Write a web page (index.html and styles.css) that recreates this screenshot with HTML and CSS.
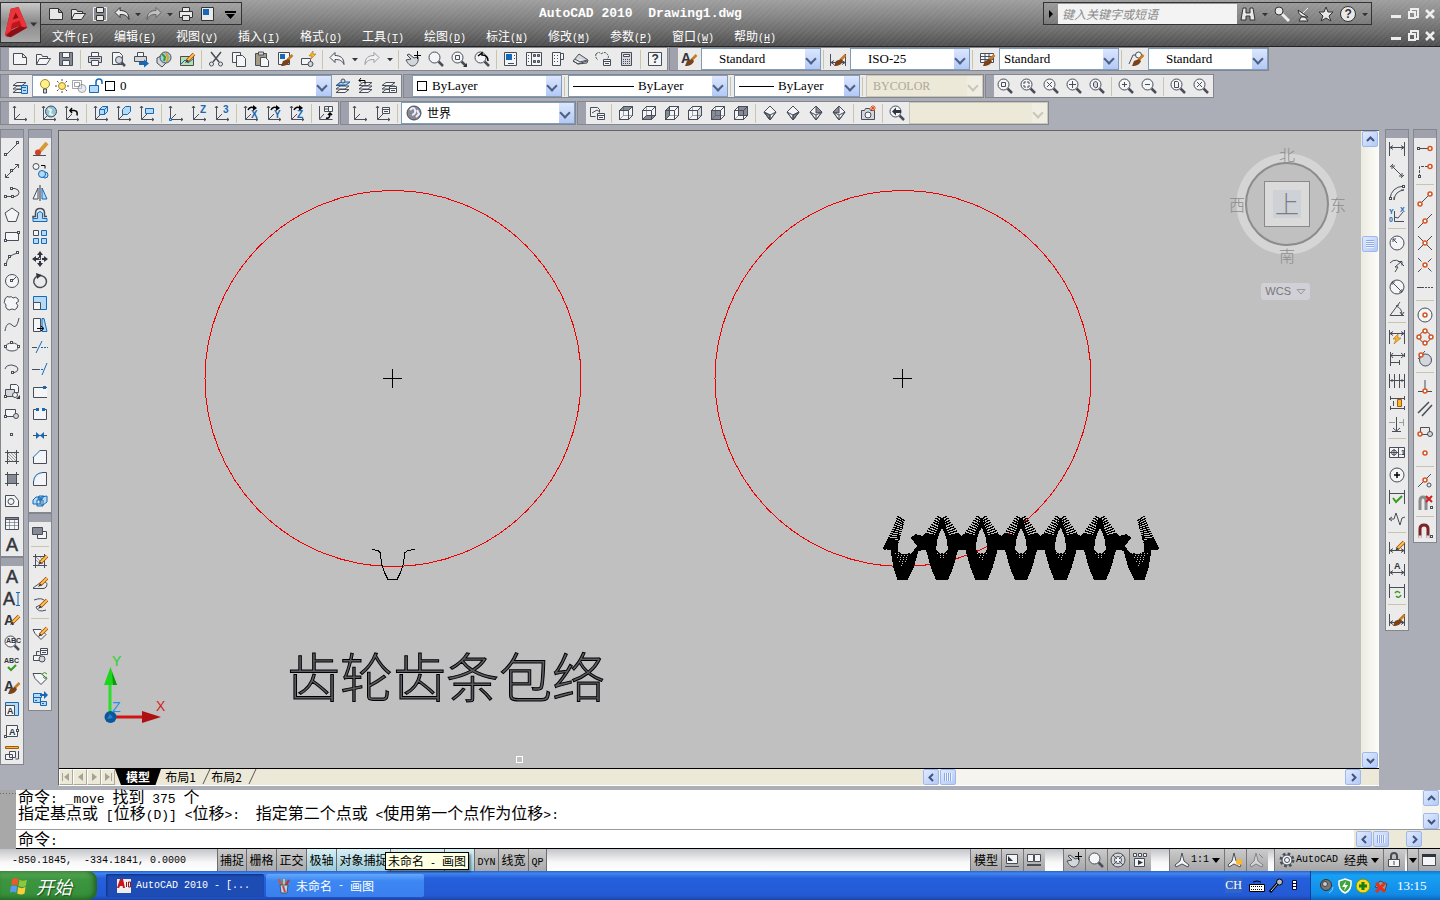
FILE: index.html
```html
<!DOCTYPE html>
<html lang="zh-CN">

<head>
  <meta charset="utf-8">
  <title>AutoCAD 2010 Drawing1.dwg</title>
  <link rel="stylesheet" href="styles.css">
  <script src="script.js"></script>
</head>

<body>
  <header class="titlebar">
    <button class="app-button" aria-label="AutoCAD">
      <svg viewBox="0 0 40 40">
        <path d="M4 33L10 6l8-2 9 21-7 4-2-5-7 3-2 7z" fill="#c3141b" />
        <path d="M10 6l8-2 9 21-5 1-3-8-8 3-1 8-6 4z" fill="#e8343a" />
        <path d="M12 17l3-7 3 5z" fill="#8d0f14" />
        <path d="M5 34l6-6 8-4 8 1-8 5-9 5z" fill="#8d0f14" />
        <path d="M30 20h7l-3.500 4z" fill="#333" />
      </svg>
    </button>
    <div class="title-rows">
      <div class="title-row">
        <div class="quick tools" data-icons="new open save undo dd redo dd print props more"></div>
        <h1>AutoCAD 2010&nbsp; Drawing1.dwg</h1>
        <div class="infocenter">
          <span class="tri-right"></span>
          <input type="text" placeholder="键入关键字或短语" aria-label="搜索">
          <span class="tools" data-icons="binoc dd key dish star helpc dd"></span>
        </div>
        <div class="tools wincontrols" data-icons="min restore close"></div>
      </div>
      <div class="title-row">
        <nav class="menu">
          <a href="#">文件<i>(<u>F</u>)</i></a>
          <a href="#">编辑<i>(<u>E</u>)</i></a>
          <a href="#">视图<i>(<u>V</u>)</i></a>
          <a href="#">插入<i>(<u>I</u>)</i></a>
          <a href="#">格式<i>(<u>O</u>)</i></a>
          <a href="#">工具<i>(<u>T</u>)</i></a>
          <a href="#">绘图<i>(<u>D</u>)</i></a>
          <a href="#">标注<i>(<u>N</u>)</i></a>
          <a href="#">修改<i>(<u>M</u>)</i></a>
          <a href="#">参数<i>(<u>P</u>)</i></a>
          <a href="#">窗口<i>(<u>W</u>)</i></a>
          <a href="#">帮助<i>(<u>H</u>)</i></a>
        </nav>
        <div class="tools wincontrols" data-icons="min restore close"></div>
      </div>
    </div>
  </header>

  <div class="toolbars">
    <div class="toolbar-row">
      <div class="toolbar">
        <span class="tools" data-icons="new open save | print preview publish globe dwf | cut copy paste match blockedit | undo dd redo dd | pan zoom zoomwin zoomprev | props center palettes sheet markup calc | help"></span>
      </div>
      <div class="toolbar">
        <span class="tools" data-icons="textstyle"></span>
        <label class="combo w120 indent"><select aria-label="文字样式"><option>Standard</option></select></label>
        <span class="tools" data-icons="| dimstyle"></span>
        <label class="combo w120 indent"><select aria-label="标注样式"><option>ISO-25</option></select></label>
        <span class="tools" data-icons="| tablestyle"></span>
        <label class="combo w120"><select aria-label="表格样式"><option>Standard</option></select></label>
        <span class="tools" data-icons="| leaderstyle"></span>
        <label class="combo w120 indent"><select aria-label="多重引线样式"><option>Standard</option></select></label>
      </div>
    </div>
    <div class="toolbar-row">
      <div class="toolbar">
        <span class="tools" data-icons="layers"></span>
        <label class="combo w300">
          <span class="glyphs" data-glyphs="bulb sun freeze lock"></span><span class="swatch"></span>
          <select aria-label="图层"><option>0</option></select>
        </label>
        <span class="tools" data-icons="layercur layerprev layerstate"></span>
      </div>
      <div class="toolbar">
        <label class="combo w150"><span class="swatch"></span><select aria-label="颜色"><option>ByLayer</option></select></label>
        <span class="tools" data-icons="|"></span>
        <label class="combo w160"><span class="line long"></span><select aria-label="线型"><option>ByLayer</option></select></label>
        <span class="tools" data-icons="|"></span>
        <label class="combo w126"><span class="line"></span><select aria-label="线宽"><option>ByLayer</option></select></label>
        <span class="tools" data-icons="|"></span>
        <label class="combo w117 off"><select aria-label="打印样式" disabled><option>BYCOLOR</option></select></label>
      </div>
      <div class="toolbar">
        <span class="tools" data-icons="zwin zdyn zscale zcen zobj | zin zout | zall zext"></span>
      </div>
    </div>
    <div class="toolbar-row">
      <div class="toolbar">
        <span class="tools" data-icons="ucs | ucsworld ucsprev | ucsface ucsobj ucsview | ucsorigin ucsz ucs3 | rotx roty rotz | ucsapply"></span>
      </div>
      <div class="toolbar">
        <span class="tools" data-icons="ucs ucsnamed |"></span>
        <label class="combo w174"><span class="glyphs" data-glyphs="world"></span><select class="cn" aria-label="坐标系"><option>世界</option></select></label>
      </div>
      <div class="toolbar">
        <span class="tools" data-icons="views | vtop vbottom vleft vright vfront vback | isw ise ine inw | camera | camprev"></span>
        <label class="combo w139 off"><select aria-label="上一视图" disabled><option></option></select></label>
      </div>
    </div>
  </div>

  <main class="workspace">
    <aside class="dock">
      <div class="dock-col">
        <div class="toolbar vertical"><span class="tools" data-icons="line xline pline polygon rect arc circle cloud spline ellipse earc insert block point hatch gradient region table mtext"></span></div>
        <div class="toolbar vertical"><span class="tools" data-icons="mtext dtext edittext find spell txtstyle scaletext justify spacetrans"></span></div>
      </div>
      <div class="dock-col">
        <div class="toolbar vertical"><span class="tools" data-icons="erase mcopy mirror offset array move rotate scale stretch trim extend breakpt break join chamfer fillet explode"></span></div>
        <div class="toolbar vertical"><span class="tools" data-icons="order | edithatch editpl editspl | editattr blockattr syncattr extract"></span></div>
      </div>
    </aside>

    <section class="document">
      <div class="canvas-row">
        <div class="canvas">
          <svg class="drawing" viewBox="59 131 1302 637">
            <g fill="none" stroke="#e00" shape-rendering="crispEdges">
              <circle cx="393" cy="378.500" r="188" />
              <circle cx="903" cy="378.500" r="188" />
            </g>
            <g fill="none" stroke="#000" shape-rendering="crispEdges">
              <path d="M383 378.500h19M392.500 369v19M893 378.500h19M902.500 369v19" />
              <path d="M372 549.500l6 1 2 2 2 13 3 8 3 6h9l3-6 3-8 2-13 3-2 7-1" />
            </g>
            <g id="envelope" shape-rendering="crispEdges"></g>
            <text class="caption" x="287" y="698">齿轮齿条包络</text>
            <rect x="516.500" y="756.500" width="6" height="6" fill="none" stroke="#fff" />
            <g class="ucs-icon">
              <path d="M110 717V684" stroke="#2ade2a" stroke-width="3" />
              <path d="M110.500 667l-6.500 18h13z" fill="#1ed51e" />
              <path d="M112 672l5 13h-4z" fill="#0a9a0a" />
              <path d="M112 717h31" stroke="#d01515" stroke-width="3" />
              <path d="M142 711l19 6-19 6z" fill="#b01010" />
              <circle cx="110.500" cy="717" r="6" fill="#0b579b" />
              <path d="M107 719l3-5 3 4" fill="#2a80c8" />
              <text x="112" y="666" fill="#1ed51e">Y</text>
              <text x="112" y="712" fill="#2a90ea">Z</text>
              <text x="156" y="711" fill="#d82020">X</text>
            </g>
            <g class="viewcube">
              <circle cx="1287" cy="204" r="46" fill="none" stroke="#d5d5d5" stroke-width="9" />
              <circle cx="1287" cy="204" r="41" fill="none" stroke="#8c8c8c" stroke-width="2" />
              <rect x="1264.500" y="181.500" width="45" height="45" fill="#dadada" stroke="#888" />
              <rect x="1273" y="190" width="28" height="28" fill="#ced1d6" />
              <text x="1275" y="213" class="face">上</text>
              <text x="1279" y="161">北</text>
              <text x="1279" y="262">南</text>
              <text x="1229" y="211">西</text>
              <text x="1330" y="211">东</text>
            </g>
          </svg>
          <button class="wcs">WCS <svg viewBox="0 0 10 6"><path d="M1 .5h8L5 5z" /></svg></button>
        </div>
        <div class="scroll v">
          <button aria-label="向上"><svg viewBox="0 0 9 9"><path d="M1 6l3.500-3.500L8 6" /></svg></button>
          <span class="thumb"></span>
          <button aria-label="向下"><svg viewBox="0 0 9 9"><path d="M1 3l3.500 3.500L8 3" /></svg></button>
        </div>
      </div>
      <div class="tab-row">
        <div class="tab-nav">
          <button aria-label="首个"><svg viewBox="0 0 12 12"><path d="M3 2v8h-1v-8zM9 2v8L4 6z" /></svg></button>
          <button aria-label="上一个"><svg viewBox="0 0 12 12"><path d="M9 2v8L4 6z" /></svg></button>
          <button aria-label="下一个"><svg viewBox="0 0 12 12"><path d="M4 2v8l5-4z" /></svg></button>
          <button aria-label="末个"><svg viewBox="0 0 12 12"><path d="M3 2v8l5-4zM9 2v8h1v-8z" /></svg></button>
        </div>
        <div class="tabs">
          <button class="tab active">模型</button>
          <button class="tab">布局1</button>
          <button class="tab">布局2</button>
        </div>
        <div class="scroll h">
          <button aria-label="向左"><svg viewBox="0 0 9 9"><path d="M6 1L2.500 4.500 6 8" /></svg></button>
          <span class="thumb"></span>
          <button aria-label="向右"><svg viewBox="0 0 9 9"><path d="M3 1l3.500 3.500L3 8" /></svg></button>
        </div>
      </div>
    </section>

    <aside class="dock right">
      <div class="dock-col">
        <div class="toolbar vertical"><span class="tools" data-icons="dlinear daligned darc dord | drad djog ddia dang | dquick dbase dcont dspace dbreak | tol cmark dinspect djogline | dedit dtedit dupdate | dimstyle"></span></div>
      </div>
      <div class="dock-col">
        <div class="toolbar vertical"><span class="tools" data-icons="track from | send smid sint sapp sext | scen squad stan | sperp spar sins snode | snear snone | ssettings"></span></div>
      </div>
    </aside>
  </main>

  <section class="command">
    <div class="command-grip"></div>
    <div class="command-body">
      <div class="history-row">
        <div class="history">
          <p>命令<i>: _move </i>找到<i> 375 </i>个</p>
          <p>指定基点或<i> [</i>位移<i>(D)] &lt;</i>位移<i>&gt;:&nbsp; </i>指定第二个点或<i> &lt;</i>使用第一个点作为位移<i>&gt;:</i></p>
        </div>
        <div class="scroll v">
          <button aria-label="向上"><svg viewBox="0 0 9 9"><path d="M1 6l3.500-3.500L8 6" /></svg></button>
          <button aria-label="向下"><svg viewBox="0 0 9 9"><path d="M1 3l3.500 3.500L8 3" /></svg></button>
        </div>
      </div>
      <div class="prompt-row">
        <label for="prompt">命令<i>:</i></label>
        <input id="prompt" type="text">
        <div class="scroll h">
          <button aria-label="向左"><svg viewBox="0 0 9 9"><path d="M6 1L2.500 4.500 6 8" /></svg></button>
          <span class="thumb"></span>
          <button aria-label="向右"><svg viewBox="0 0 9 9"><path d="M3 1l3.500 3.500L3 8" /></svg></button>
        </div>
      </div>
    </div>
  </section>

  <footer class="status">
    <div class="coords">-850.1845,&nbsp; -334.1841, 0.0000</div>
    <div class="toggles">
      <button>捕捉</button>
      <button>栅格</button>
      <button>正交</button>
      <button class="on">极轴</button>
      <button class="on wide">对象捕捉</button>
      <button class="on wide" aria-label="对象追踪"></button>
      <button class="on" aria-label="动态坐标系"></button>
      <button class="dyn"><i>DYN</i></button>
      <button>线宽</button>
      <button class="qp"><i>QP</i></button>
      <span class="tooltip">未命名<i> - </i>画图</span>
    </div>
    <div class="status-group"><button class="text">模型</button><span class="tools" data-icons="mspace layout"></span></div>
    <div class="status-group"><span class="tools" data-icons="pan zoom wheel motion"></span></div>
    <div class="status-group near"><button class="text"><span class="glyphs" data-glyphs="anno"></span><i>1:1</i><span class="tri-down"></span></button><span class="tools" data-icons="annovis annoadd"></span></div>
    <div class="status-group tight"><button class="text"><span class="glyphs" data-glyphs="gear"></span><i>AutoCAD&nbsp;</i>经典<span class="tri-down"></span></button><span class="tools" data-icons="padlock"></span></div>
    <div class="status-group last"><button class="tiny" aria-label="菜单"><span class="tri-down"></span></button><span class="tools" data-icons="clean"></span></div>
  </footer>

  <div class="taskbar">
    <button class="start">
      <svg viewBox="0 0 20 20">
        <path d="M3 4q3-2 6 0l-1 6q-3-2-6 0z" fill="#f0582a" />
        <path d="M10 4.500q3 2 7 0l-1 6q-3 2-7 0z" fill="#8cc83c" />
        <path d="M1.800 11q3-2 6 0l-1 6q-3-2-6 0z" fill="#5a9af0" />
        <path d="M8.800 11.500q3 2 7 0l-1 6q-3 2-7 0z" fill="#fccf3a" />
      </svg>
      开始
    </button>
    <button class="task active">
      <svg viewBox="0 0 16 16">
        <path d="M1 1h14v14h-14z" fill="#eee" />
        <path d="M1 10l3-9h3l2 9h-2l-.5-2H4l-1 2z" fill="#c8141b" />
        <path d="M10.500 4v5M12.500 4h2v5h-2z" stroke="#a01010" fill="none" />
      </svg>
      <i>AutoCAD 2010 - [...</i>
    </button>
    <button class="task">
      <svg viewBox="0 0 16 16">
        <path d="M5 7L3 1" stroke="#e05020" stroke-width="2" />
        <path d="M8 7V1" stroke="#f0c030" stroke-width="2" />
        <path d="M10 7l3-5" stroke="#c03030" stroke-width="2" />
        <path d="M4 7h8l-1 8H5z" fill="#b8d4ee" stroke="#456" />
        <path d="M7 8l2 6" stroke="#d04040" stroke-width="2" />
      </svg>
      未命名<i> - </i>画图
    </button>
    <div class="lang"><span class="ch">CH</span><span class="glyphs" data-glyphs="keyboard mic lopt"></span></div>
    <div class="tray"><span class="glyphs" data-glyphs="speaker shield plus netx"></span><time>13:15</time></div>
  </div>
</body>

</html>
```
FILE: styles.css
```css
* {
  box-sizing: border-box;
  margin: 0;
  padding: 0;
}

body {
  display: flex;
  flex-direction: column;
  height: 100vh;
  overflow: hidden;
  background: #abaeb6;
  color: #000;
  font: 12px/16px "Noto Sans CJK SC", sans-serif;
}

button,
input,
select {
  font: inherit;
  color: inherit;
  border: 0;
  background: none;
  border-radius: 0;
}

/* latin runs are half as wide as the hanzi */
i {
  font-family: "Liberation Mono", monospace;
  font-size: 10px;
  font-style: normal;
  line-height: 1;
  white-space: pre;
}

svg {
  display: block;
}

/* title bar */
.titlebar {
  display: flex;
  flex: none;
  height: 47px;
  background:
    repeating-linear-gradient(135deg, rgba(255, 255, 255, .04) 0 2px, transparent 2px 4px),
    linear-gradient(#9e9e9e, #8a8a8a 30%, #6a6a6a 70%, #4e4e4e);
  border-bottom: 1px solid #222;
  color: #fff;
}

.app-button {
  flex: none;
  width: 41px;
  height: 41px;
  margin-top: 2px;
  border: 1px solid #333;
  background: linear-gradient(#c8c8c8, #8a8a8a 50%, #aaa);
}

.title-rows {
  flex: 1;
}

.title-row {
  display: flex;
  align-items: center;
  justify-content: space-between;
  height: 22px;
  padding-right: 1px;
}

.title-row:first-child {
  height: 25px;
  padding-top: 2px;
}

.title-row h1 {
  flex: 1;
  padding-left: 297px;
  font: bold 13px/20px "Liberation Mono", monospace;
  white-space: pre;
}

/* toolbars */
.toolbars {
  display: flex;
  flex-direction: column;
  flex: none;
  gap: 3px;
  padding-bottom: 4px;
}

.toolbar-row {
  display: flex;
  gap: 1px;
  height: 24px;
}

.toolbar {
  display: flex;
  align-items: center;
  border: 1px solid #686b73;
  border-left: 9px solid #9fa2ad;
  outline: 1px solid #84868e;
  outline-offset: -1px;
  background: #ebebeb;
}

.tools {
  display: flex;
  align-items: center;
}

.tools button {
  display: flex;
  flex: none;
  align-items: center;
  justify-content: center;
  width: 23px;
  height: 22px;
}

.tools .dd {
  width: 12px;
}

.tools hr {
  flex: none;
  width: 1px;
  height: 19px;
  margin: 0 3px 0 2px;
  border: 0;
  background: #c9c4ac;
}

.icon {
  flex: none;
  width: 17px;
  height: 16px;
  overflow: visible;
  fill: none;
  stroke: #484d58;
  stroke-width: 1;
}

.dd .icon {
  width: 6px;
}

.icon .b { stroke: #1769b5; }
.icon .fb { fill: #b4daf5; stroke: #1769b5; }
.icon .fw { fill: #f4f5f7; }
.icon .fg { fill: #d3d6db; }
.icon .fd { fill: #858a94; }
.icon .fk { fill: #30343c; stroke: none; }
.icon .blue { fill: #1769b5; stroke: none; }
.icon .o { fill: #fff; stroke: #d9531e; stroke-width: 1.500; }
.icon .r { stroke: #d02020; stroke-width: 2; }
.icon .gr { stroke: #3a9a20; stroke-width: 2; }
.icon .y { fill: #f8b62c; stroke: #a35a10; }
.icon .dim { opacity: .5; }
.icon .thick { stroke-width: 2.500; }

.icon text {
  fill: #30343c;
  stroke: none;
  font: bold 9px "Liberation Sans", sans-serif;
}

.icon .big { font-size: 18px; font-weight: normal; stroke: #30343c; stroke-width: .5; }
.icon .mid { font-size: 14px; }
.icon .mark { font-size: 12px; }
.icon .tb { fill: #1769b5; font-size: 10px; }
.icon .tiny-text { font-size: 7px; }

.titlebar .icon {
  stroke: #eee;
}

.titlebar .icon .fk {
  fill: #eee;
}

.titlebar .icon .fw,
.titlebar .icon .fg {
  fill: #e8e8e8;
  stroke: #333;
}

.titlebar .dd .icon .fk {
  fill: #333;
}

.title-row .quick {
  height: 23px;
  padding-left: 4px;
  border: 1px solid #333;
  border-left: 0;
  background: rgba(255, 255, 255, .08);
}

.title-row .tools button {
  width: 22px;
}

.title-row .tools .dd {
  width: 12px;
}

.title-row .quick .dd {
  width: 10px;
}

.infocenter {
  display: flex;
  align-items: center;
  height: 23px;
  border: 1px solid #333;
}

.infocenter input {
  width: 179px;
  height: 20px;
  margin-left: 5px;
  padding: 0 4px;
  background: #f3f3f3;
  font-style: italic;
}

.infocenter input::placeholder {
  color: #888;
}

.tri-right {
  margin-left: 5px;
  border: 4px solid transparent;
  border-left-color: #000;
  border-right: 0;
}

.wincontrols {
  margin-left: 16px;
}

.title-row .wincontrols button {
  width: 17px;
}

.menu {
  display: flex;
  padding-left: 11px;
}

.menu a {
  width: 62px;
  color: #fff;
  text-decoration: none;
}

.combo {
  display: flex;
  align-items: center;
  position: relative;
  height: 22px;
  padding-left: 4px;
  border: 1px solid #7f9db9;
  background: #fff;
}

.combo select {
  flex: 1;
  min-width: 0;
  height: 20px;
  appearance: none;
  font: 13px/20px "Liberation Serif", serif;
}

.combo select.cn {
  font: 12px/20px "Noto Sans CJK SC", sans-serif;
}

/* drop-down button and its chevron */
.combo::after {
  content: "";
  flex: none;
  width: 15px;
  height: 20px;
  background: linear-gradient(#dce6fd, #b2c9f6);
  pointer-events: none;
}

.combo::before {
  content: "";
  position: absolute;
  z-index: 1;
  top: 6px;
  right: 5px;
  width: 6px;
  height: 6px;
  border: solid #4d6185;
  border-width: 0 2px 2px 0;
  transform: rotate(45deg);
  pointer-events: none;
}

.combo.indent {
  padding-left: 17px;
}

.combo.off {
  padding-left: 6px;
  border-color: #c9c7ba;
  background: #ece9d8;
  color: #aca899;
}

.combo.off select {
  opacity: 1;
  color: #aca899;
  font-size: 12px;
}

.combo.off::after {
  background: #f0eee2;
}

.combo.off::before {
  border-color: #c9c7ba;
}

.w117 { width: 117px; }
.w120 { width: 120px; }
.w126 { width: 126px; }
.w139 { width: 139px; }
.w150 { width: 150px; }
.w160 { width: 160px; }
.w174 { width: 174px; }
.w300 { width: 300px; }

.glyphs {
  display: flex;
  align-items: center;
}

.combo .glyphs {
  margin-right: 4px;
}

.swatch {
  width: 10px;
  height: 10px;
  margin-right: 5px;
  border: 1px solid #000;
}

.glyphs + .swatch {
  margin-left: -4px;
}

.line {
  width: 35px;
  height: 1px;
  margin-right: 4px;
  background: #000;
}

.line.long {
  width: 61px;
}

/* docks and drawing window */
.workspace {
  display: flex;
  flex: 1;
  min-height: 0;
}

.dock {
  display: flex;
  gap: 4px;
  width: 58px;
}

.dock.right {
  width: 61px;
  padding-left: 6px;
}

.toolbar.vertical {
  width: 24px;
  border: 1px solid #686b73;
  border-top: 9px solid #9fa2ad;
}

.vertical .tools {
  flex-direction: column;
  align-items: flex-start;
  width: 22px;
}

.vertical .tools hr {
  width: 18px;
  height: 1px;
  margin: 2px 2px 3px;
}

.document {
  display: flex;
  flex: 1;
  flex-direction: column;
  min-width: 0;
  margin: 1px 0 4px;
  border-left: 1px solid #66645e;
  border-top: 1px solid #66645e;
  border-bottom: 1px solid #fff;
}

.canvas-row {
  display: flex;
  flex: 1;
  min-height: 0;
}

.canvas {
  position: relative;
  flex: 1;
  min-width: 0;
  background: #c0c0c0;
}

.drawing {
  width: 100%;
  height: 100%;
}

.drawing .caption {
  font-size: 53px;
  font-weight: 300;
  fill: #5c5c64;
  stroke: #000;
  stroke-width: 1;
}

.ucs-icon text {
  font: 14px "Liberation Sans", sans-serif;
}

.viewcube text {
  fill: #8d8d8d;
  font: 300 16px "Noto Sans CJK SC", sans-serif;
}

.viewcube .face {
  fill: #7a7e86;
  font-size: 24px;
}

.wcs {
  display: flex;
  position: absolute;
  top: 152px;
  right: 51px;
  align-items: center;
  gap: 5px;
  padding: 0 4px;
  border-radius: 3px;
  background: #d0d0d6;
  color: #777;
  font: 11px/17px "Liberation Sans", sans-serif;
}

.wcs svg {
  width: 10px;
  fill: none;
  stroke: #999;
}

.scroll {
  display: flex;
  background: #f5f4ee;
}

.scroll.v {
  flex-direction: column;
  align-items: center;
  justify-content: space-between;
  width: 18px;
}

.scroll button,
.scroll .thumb {
  display: flex;
  flex: none;
  align-items: center;
  justify-content: center;
  width: 16px;
  height: 16px;
  border: 1px solid #9db8ec;
  border-radius: 2px;
  background: linear-gradient(135deg, #e0eafe, #b4c9f5);
}

.scroll svg {
  width: 9px;
  fill: none;
  stroke: #3f5480;
  stroke-width: 2;
}

.scroll.v .thumb {
  margin-bottom: 404px;
}

.scroll .thumb::before {
  content: "";
  width: 8px;
  height: 8px;
  background: repeating-linear-gradient(#8ba9e6 0 1px, #eef3ff 1px 2px);
}

.scroll.h .thumb::before {
  background: repeating-linear-gradient(90deg, #8ba9e6 0 1px, #eef3ff 1px 2px);
}

.canvas-row .scroll.v {
  background: linear-gradient(90deg, #ecebe0, #fdfdfa);
}

.canvas-row .scroll.v .thumb {
  margin-top: -8px;
}

.tab-row {
  display: flex;
  flex: none;
  height: 17px;
  border-top: 1px solid #000;
  background: #ece9d8;
}

.tab-nav {
  display: flex;
}

.tab-nav button {
  width: 14px;
  border: 1px solid #aca899;
  border-color: #fff #aca899 #aca899 #fff;
}

.tab-nav svg {
  width: 12px;
  fill: #a5a294;
}

.tabs {
  display: flex;
  flex: 1;
}

.tab {
  position: relative;
  width: 46px;
  height: 16px;
  padding-right: 7px;
  line-height: 16px;
}

.tab::after {
  content: "";
  position: absolute;
  top: 0;
  right: 0;
  height: 15px;
  border-right: 1px solid #555;
  transform: skewX(-25deg);
}

.tab.active {
  padding-right: 0;
  background: #000;
  color: #fff;
  font-weight: bold;
  clip-path: polygon(0 0, 100% 0, 88% 100%, 13% 100%);
}

.tab-row .scroll.h {
  width: 438px;
  margin-right: 18px;
}

.scroll.h {
  gap: 1px;
}

.scroll.h button:last-child {
  margin-left: auto;
}

/* command line */
.command {
  display: flex;
  flex: none;
  height: 59px;
  background: #fff;
  font-size: 16px;
}

.command i {
  font-size: 13px;
}

.command-grip {
  width: 16px;
  background: radial-gradient(#666 30%, transparent 40%) 2px 2px / 3px 3px repeat-x, #a8a8a8;
}

.command-body {
  display: flex;
  flex: 1;
  flex-direction: column;
}

.history-row {
  display: flex;
  flex: none;
  height: 40px;
  border-bottom: 1px solid #999;
}

.history {
  flex: 1;
  margin-top: -2px;
  padding-left: 2px;
  white-space: nowrap;
}

.history p {
  height: 16px;
}

.prompt-row {
  display: flex;
  align-items: center;
  height: 19px;
  border-bottom: 1px solid #000;
}

.prompt-row label {
  padding-left: 2px;
}

.prompt-row input {
  flex: 1;
}

.prompt-row .scroll.h {
  width: 86px;
  padding: 1px 18px 1px 2px;
  background: #ece9d8;
}

/* status bar */
.status {
  display: flex;
  flex: none;
  height: 22px;
  background: linear-gradient(#c4c5ca, #f8f8f8 60%, #fff);
}

.coords {
  width: 217px;
  padding-left: 12px;
  font: 10px/23px "Liberation Mono", monospace;
  white-space: pre;
}

.toggles {
  display: flex;
  position: relative;
  flex: 1;
}

.toggles button {
  width: 30px;
  border-right: 1px solid #6d6d70;
  background: linear-gradient(#c9c9c9, #ababab);
}

.toggles button:first-child {
  border-left: 1px solid #6d6d70;
}

.toggles .wide {
  width: 54px;
}

.toggles .on {
  background: linear-gradient(#d8f0f5, #9ccbd6);
}

.toggles .dyn {
  width: 24px;
}

.toggles .qp {
  width: 18px;
}

.tooltip {
  position: absolute;
  top: 3px;
  left: 168px;
  padding: 0 2px;
  border: 1px solid #000;
  background: #ffffe1;
  box-shadow: 2px 2px 2px rgba(0, 0, 0, .4);
  line-height: 15px;
  white-space: nowrap;
}

.status-group {
  display: flex;
  margin-right: 18px;
}

.status-group.near {
  margin-right: 6px;
}

.status-group.tight {
  margin-right: 2px;
}

.status-group.last {
  margin-right: 0;
}

.status-group button,
.status-group .tools button {
  display: flex;
  align-items: center;
  width: 22px;
  height: 22px;
  border-left: 1px solid #77777a;
  background: linear-gradient(#cbcbcb, #a6a6a6);
}

.status-group .text {
  width: auto;
  padding: 0 3px;
}

.near .text,
.tight .text {
  padding: 0 4px;
}

.status-group .tiny {
  width: 11px;
}

.tri-down {
  margin-left: 3px;
  border: 4px solid transparent;
  border-top: 5px solid #000;
  border-bottom: 0;
}

.tiny .tri-down {
  margin-left: 1px;
}

/* taskbar */
.taskbar {
  display: flex;
  flex: none;
  height: 29px;
  background: linear-gradient(#2a5fd0, #3f86ef 8%, #2560dc 25%, #2459d5 85%, #1a45a8);
  color: #fff;
}

.start {
  display: flex;
  align-items: center;
  gap: 6px;
  width: 97px;
  margin-right: 9px;
  padding-left: 9px;
  border-radius: 0 9px 9px 0;
  background: linear-gradient(#5cab58, #3d9540 30%, #37903a 80%, #2c7a30);
  box-shadow: inset -3px 0 5px #235f24;
  font-size: 18px;
  font-style: italic;
  text-shadow: 1px 1px 1px #1c4a1c;
}

.start svg {
  width: 21px;
}

.task {
  display: flex;
  align-items: center;
  width: 158px;
  height: 23px;
  margin: 3px 2px 0 0;
  padding-left: 10px;
  border-radius: 2px;
  background: linear-gradient(#63a8fb, #3d87f3 30%, #3a80ee);
}

.task.active {
  background: #1c4cb4;
  box-shadow: inset 1px 1px 2px #0e2f7c;
}

.task svg {
  width: 16px;
  margin-right: 4px;
}

.lang {
  display: flex;
  align-items: center;
  gap: 7px;
  margin-left: auto;
  padding-right: 6px;
  font: 12px "Liberation Serif", serif;
}

.lang .glyphs {
  gap: 2px;
}

.ch {
  background: #3064c8;
}

.tray {
  display: flex;
  align-items: center;
  gap: 7px;
  width: 130px;
  padding-left: 8px;
  border-left: 1px solid #0b3f9e;
  background: linear-gradient(#0d78d8, #19a0f2 15%, #118ce8 80%, #0c66bc);
  font: 13px "Liberation Serif", serif;
}

.tray .glyphs {
  gap: 1px;
}
```
FILE: script.js
```js
const axes = '<path d="M2.500 1v13.500h12.500M1 3l1.500-2L4 3M13 13l2 1.500-2 1.500M2.500 14.500L8 9"/>';
const mag = '<path class="thick" d="M10.500 10.500l4.500 4.500"/><circle class="fw" cx="6.500" cy="6.500" r="5.500"/>';
const dimLine = '<path d="M.5 3v12M15.500 3v12M1 11.500h14M4 9.500l-3 2 3 2M12 9.500l3 2-3 2"/>';
const brush = '<path d="M15.500 4l-5 5" stroke="#c87a20" class="thick"/><path d="M11 8l-5 2-2 5c5 0 8-2 9-5z" fill="#7a4218" stroke="none"/>';
const pencil = '<path d="M15 3l-7 7" stroke="#a34b10" stroke-width="3.500"/><path d="M15 3l-7 7" stroke="#ffc24a" stroke-width="2"/><path class="fk" d="M8 8.500L6 12l4-2z"/>';
const node = (x, y) => `<circle class="o" cx="${x}" cy="${y}" r="2"/>`;
const grip = (x, y) => `<rect class="fw" x="${x - 1.5}" y="${y - 1.5}" width="2" height="2"/>`;
const win = (x, y) => `<path class="fw" d="M${x + .5} ${y + .5}h7v6h-7zM${x + .5} ${y + 2.5}h7M${x + 2} ${y + 4.5}h4"/>`;
const cube = (face) => `<path class="fw" d="M1.500 5.500l4-4h9v9l-4 4h-9z"/>${face}<path d="M1.500 5.500h9v9M10.500 5.500l4-4M1.500 5.500v9h9l4-4v-9h-9z"/><path d="M5.500 1.500v9h9M1.500 14.500l4-4" class="dim"/>`;
const iso = (face) => `<path class="fw" d="M8 1l6 6-6 8-6-8z"/>${face}<path d="M8 1l6 6-6 8-6-8zM2 7l6 3 6-3M8 10v5"/>`;
const rot = (letter) => `${axes}<path d="M5 5q2-4 6-2" stroke="#000" stroke-width="1.500"/><path d="M10 0l4 3-4 3z" fill="#000" stroke="none"/><text class="tb" x="8" y="13">${letter}</text>`;
const sheetLine = (y) => `<path class="fw" d="M1 ${y}l4-3h9l-4 3z"/>`;
const stack = sheetLine(14.5) + sheetLine(11) + sheetLine(7.5);

const icons = {
  new: '<path class="fw" d="M1.500 2.500h9l4 4v7h-13zM10.500 2.500v4h4"/>',
  open: '<path class="fw" d="M1.500 13.500v-10h5l1 2h5v2M1.500 13.500l3-6h11l-4 6z"/>',
  save: '<path class="fd" d="M1.500 1.500h13v13h-13z"/><path class="fw" d="M4.500 1.500h7v5h-7zM4.500 9.500h7v5h-7z"/>',
  print: '<path class="fw" d="M4.500 6V1.500h7V6"/><path class="fg" d="M1.500 5.500h13v6h-13z"/><path class="fw" d="M4.500 9.500h7v5h-7z"/><path d="M3 7.500h10"/>',
  preview: '<path class="fw" d="M2.500 1.500h7l3 3v9h-10z"/><path class="thick" d="M11 11l4 4"/><circle class="fg" cx="9" cy="9" r="3.500"/>',
  publish: '<path class="fw" d="M4.500 5V1.500h6V5"/><path class="fg" d="M1.500 5.500h12v5h-12z"/><path class="blue" d="M6 11h5V8.500l5 4-5 4V14H6z"/>',
  globe: '<path class="fg" d="M1 7l6-3 3 8-4 4-5-4z"/><circle cx="9.500" cy="6.500" r="5.500" fill="#9bd0e8"/><path d="M6 3l3 3-1 4" stroke="#3a9a20" stroke-width="2"/><path d="M10 2l2 4-1 5" stroke="#e0a020" stroke-width="2"/>',
  dwf: '<path d="M1.500 5.500h13v9h-13z" fill="#b8dfa8"/><path class="b" d="M2 13l4-4 3 3 5-4"/>' + pencil,
  cut: '<path d="M3 1l8 10M13 1L5 11" stroke-width="1.500"/><circle cx="3.500" cy="13" r="2"/><circle cx="12.500" cy="13" r="2"/>',
  copy: '<path class="fw" d="M1.500 1.500h8v10h-8z"/><path class="fw" d="M5.500 4.500h6l3 3v8h-9z"/>',
  paste: '<path d="M1.500 2.500h11v12h-11z" fill="#a39b84"/><path class="fg" d="M4.500 1h5v3h-5z"/><path class="fw" d="M6.500 6.500h5l3 3v6h-8z"/>',
  match: '<path class="fw" d="M1.500 1.500h11v12h-11z"/><path class="blue" d="M3 3h5v5H3z"/>' + brush,
  blockedit: '<path class="fw" d="M1.500 7.500h9v6h-9z"/><circle class="fg" cx="10.500" cy="13" r="2.500"/><path class="y" d="M13 0L9 5h3l-2 4 6-6h-3z" stroke-width=".5"/>',
  undo: '<path class="fw" d="M1 6.500l5-5v3c5 0 9 2 9 9-2-4-4-5-9-5v3z"/>',
  redo: '<path class="fw dim" d="M15 6.500l-5-5v3c-5 0-9 2-9 9 2-4 4-5 9-5v3z"/>',
  dd: '<path class="fk" d="M0 5h16L8 14z"/>',
  more: '<path d="M3 5h11v2H3zM4 8h9l-4.500 5z" fill="#000" stroke="none"/>',
  pan: '<path class="fg" d="M1 9l5-1-4-4 2-1 5 4 4-1c1 4-1 8-5 9-3 0-5-2-7-6z"/><path d="M12.500 0v8M9 4.500h7" stroke="#000"/>',
  zoom: mag,
  zoomwin: mag + '<path d="M4.500 4.500h4v4h-4z"/><path class="fk" d="M16 12v4h-4z"/>',
  zoomprev: mag + '<path d="M4 5l4-3v2c4 0 6 2 6 6" stroke="#000" stroke-width="1.500"/>',
  props: '<path class="fw" d="M1.500 1.500h12v13h-12z"/><path class="blue" d="M3 3h6v6H3z"/><path d="M11 4.500h1M11 7.500h1M5 12.500h6"/>',
  center: '<path class="fw" d="M.5 1.500h15v13H.5zM5.500 1.500v13M2 4.500h1M2 7.500h1M2 10.500h1"/><path class="fd" d="M7.500 3.500h2v2h-2zM11.500 3.500h2v2h-2zM7.500 9.500h2v2h-2zM11.500 9.500h2v2h-2z"/>',
  palettes: '<path class="fw" d="M3.500 1.500h8v13h-8zM11.500 2.500h3v6h-3z"/><path d="M5 4.500h1M8 4.500h1M5 7.500h1M8 7.500h1M5 10.500h1M8 10.500h1"/>',
  sheet: '<path class="fg" d="M1 10l6-7 9 6-1 3-9 1zM1 10l5 3 9-3M3 8l5 3 7-2"/>',
  markup: '<path d="M1 3q3-3 5 0 4-3 6 0 3 3 0 5M1 3q-1 4 2 6" stroke-dasharray="2 1"/>' + win(8, 8),
  calc: '<path class="fg" d="M3.500 1.500h10v13h-10z"/><path class="fw" d="M5.500 3.500h6v2h-6z"/><path d="M5 8.500h7M5 10.500h7M5 12.500h7" stroke-dasharray="1 1"/>',
  help: '<path class="fw" d="M1.500 1.500h13v13h-13z"/><text class="mark" x="4.500" y="12">?</text>',
  textstyle: '<text class="mid" x="0" y="12">A</text>' + brush,
  dimstyle: dimLine + brush,
  tablestyle: '<path class="fw" d="M1.500 2.500h13v9h-13zM1.500 5.500h13M1.500 8.500h13M6 3v8M10 3v8"/>' + brush,
  leaderstyle: '<path d="M1 13L5 4h4"/><circle class="fw" cx="10.500" cy="4" r="3"/>' + brush,

  layers: stack + '<path class="fb" d="M9.500 7.500h6v8h-6zM10 9.500h4M11 12.500h3"/>',
  layercur: stack + '<path class="fb" d="M2 7l4-3h9l-4 3z"/><circle class="fg" cx="8" cy="3" r="2"/>',
  layerprev: stack + '<path d="M1 2.500h6v4M3 0L1 2.500l2 2" stroke="#000"/>',
  layerstate: stack + win(8, 8),
  bulb: '<circle cx="8" cy="6" r="4.500" fill="#fff08a" stroke="#a48a20"/><path class="fg" d="M6.500 11h3v4h-3z"/>',
  sun: '<circle cx="8" cy="8" r="3.500" fill="#ffe678" stroke="#a4851a"/><path d="M8 1v2M8 13v2M1 8h2M13 8h2M3 3l1.500 1.500M11.500 11.500L13 13M13 3l-1.500 1.500M4.500 11.500L3 13"/>',
  freeze: '<path class="dim" d="M1.500 2.500h9v8h-9zM3.500 4.500h5v4h-5z"/><circle class="fg dim" cx="11" cy="10.500" r="4"/>',
  lock: '<path d="M8 8V4q0-3 3-3t3 3v2" stroke="#1769b5" stroke-width="1.500"/><path class="fb" d="M1.500 7.500h9v7h-9z"/>',
  zwin: mag + '<path d="M4.500 4.500h4v4h-4z"/>',
  zdyn: mag + '<path d="M4 6V4h2M7 4h2v2M9 7v2H7M6 9H4V7"/>',
  zscale: mag + '<path d="M4 4l5 5M9 4L4 9"/>',
  zcen: mag + '<path d="M6.500 3v7M3 6.500h7"/>',
  zobj: mag + '<path class="fg" d="M4.500 5l2-2 2 2v4l-2 1-2-2z"/>',
  zin: mag + '<path d="M4 6.500h5M6.500 4v5"/>',
  zout: mag + '<path d="M4 6.500h5"/>',
  zall: mag + '<path class="fw" d="M4.500 3.500h3l1 1v5h-4z"/>',
  zext: mag + '<path d="M4 4l5 5M9 4L4 9"/>',

  ucs: axes,
  ucsworld: axes + '<circle cx="10" cy="6.500" r="5.500" fill="#8fc4dc"/><path d="M7 4l3 1-1 4 3 1" stroke="#e8f4e0" stroke-width="2"/>',
  ucsprev: axes + '<path d="M6 5.500h4q4 0 3 5M8 3L6 5.500 8 8" stroke="#000" stroke-width="1.500"/>',
  ucsface: axes + '<path class="fb" d="M6.500 4.500l3-3h5v5l-3 3h-5zM6.500 4.500h5v5M11.500 4.500l3-3"/>',
  ucsobj: axes + '<path class="fb" d="M6.500 4.500l3-3h5v5l-3 3h-5z"/>',
  ucsview: axes + '<path class="fb" d="M6.500 3.500h8v5h-8z"/>',
  ucsorigin: axes + '<path class="fb" d="M1.500 13.500h2v2h-2z"/>',
  ucsz: axes + '<text class="tb" x="9" y="8">Z</text>',
  ucs3: axes + '<text class="tb" x="9" y="8">3</text>',
  rotx: rot('X'),
  roty: rot('Y'),
  rotz: rot('Z'),
  ucsapply: '<path d="M1.500 1v13.500h13M1.500 14L6 9"/><path class="fw" d="M6.500 1.500h8v5h-8zM10.500 1.500v5M6.500 4h4"/><path d="M8 13q4 1 4-4M10 10l2-2 2 2" stroke="#000" stroke-width="1.500"/>',
  ucsnamed: axes + win(7, 2),
  world: '<circle class="fd" cx="8" cy="8" r="7"/><path d="M4 5q4-4 5 0t-3 5M11 5l2 4-3 3" stroke="#eef" stroke-width="2"/>',
  views: '<path class="fw" d="M1.500 2.500h7l2 2v3M1.500 2.500v9h5M3 8l5-3 3 2"/>' + win(8, 8),
  vtop: cube('<path class="fd" d="M1.500 5.500l4-4h9l-4 4z"/>'),
  vbottom: cube('<path class="fd" d="M1.500 14.500l4-4h9l-4 4z"/>'),
  vleft: cube('<path class="fd" d="M1.500 5.500l4-4v9l-4 4z"/>'),
  vright: cube('<path class="fg" d="M10.500 5.500l4-4v9l-4 4z"/>'),
  vfront: cube('<path class="fd" d="M1.500 5.500h9v9h-9z"/>'),
  vback: cube('<path class="fd" d="M5.500 1.500h9v9h-9z"/>'),
  isw: iso('<path class="fd" d="M2 7l6 3v5z"/>'),
  ise: iso('<path class="fd" d="M14 7l-6 3v5z"/>'),
  ine: iso('<path class="fd" d="M8 1l6 6-6 1z"/>'),
  inw: iso('<path class="fd" d="M8 1L2 7l6 1z"/>'),
  camera: '<path class="fg" d="M1.500 5.500h3l1-2h4l1 2h4v9h-13z"/><circle class="fw" cx="8" cy="10" r="3"/><path d="M13 0v6M10 3h6M11 1l4 4M15 1l-4 4" stroke="#e8501a"/>',
  camprev: mag + '<path class="fk" d="M3 6.500l4-4V5h5v3H7v2.500z"/>',

  line: '<path d="M2 14L14 2"/>' + grip(2, 14) + grip(14, 2),
  xline: '<path d="M1.500 14.500l13-13M1.500 11v3.500H5M11 1.500h3.500V5"/>' + grip(8, 8),
  pline: '<path d="M2 11.500h9q4-1 4-4t-4-4H8"/>' + grip(2, 12) + grip(9, 12) + grip(8, 4),
  polygon: '<path class="fw" d="M8 1l7 5-3 8.500H4L1 6z"/>',
  rect: '<path class="fw" d="M1.500 3.500h13v8h-13z"/>' + grip(2, 12) + grip(15, 4),
  arc: '<path d="M2 14Q3 4 14 2"/>' + grip(2, 14) + grip(6, 6) + grip(14, 2),
  circle: '<circle class="fw" cx="8" cy="8" r="6.500"/><path d="M8 8l4-4"/>' + grip(8, 8),
  cloud: '<path class="fw" d="M5 2q3-1 4 1 3-2 5 1t-2 4q3 2 1 5t-5 1q-3 2-5 0t-1-4Q-1 8 1 4t4-2z"/>',
  spline: '<path d="M1 14c1-7 4-9 7-6s5 2 7-7"/>',
  ellipse: '<ellipse class="fw" cx="8" cy="8" rx="6.500" ry="4"/>' + grip(2, 8) + grip(15, 8) + grip(8, 4),
  earc: '<path d="M1 8q1-4 7-4 6 1 6 4t-5 4"/>' + grip(9, 12),
  insert: '<path class="fw" d="M6.500 1.500h6l2 2v6h-8z"/><path class="fg" d="M1.500 6.500h9v7h-9z"/><circle class="fw" cx="11" cy="12" r="2.500"/><path class="fk" d="M16 12v4h-4z"/>' + grip(2, 14),
  block: '<path class="fw" d="M1.500 4.500h10v7h-10z"/><circle class="fg" cx="12" cy="11" r="2.500"/>' + grip(2, 12),
  point: grip(8, 8),
  hatch: '<path d="M3.500 1v14M12.500 1v14M1 3.500h14M1 12.500h14"/><path class="dim" d="M4 4l8 8M7 4l5 5M4 7l5 5M10 4l2 2M4 10l2 2"/>',
  gradient: '<path class="fd" d="M3.500 3.500h9v9h-9z"/><path d="M3.500 1v14M12.500 1v14M1 3.500h14M1 12.500h14"/>',
  region: '<path class="fw" d="M1.500 2.500h9l4 5v6h-13z"/><circle cx="7" cy="8.500" r="3"/>',
  table: '<path class="fw" d="M1.500 2.500h13v12h-13z"/><path class="fd" d="M1.500 2.500h13v2h-13z"/><path class="dim" d="M1 7.500h14M1 10.500h14M5.500 5v9M10.500 5v9"/>',
  mtext: '<text class="big" x="2" y="14">A</text>',
  dtext: '<text class="big" x="-1" y="14">A</text><path class="b" d="M12 1.500h4M14 2v12M12 14.500h4"/>',
  edittext: '<text class="mid" x="0" y="12">A</text>' + pencil,
  txtstyle: '<text class="mid" x="0" y="12">A</text>' + brush,
  find: mag + '<text class="tiny-text" x="2" y="8">ABC</text>',
  spell: '<text class="tiny-text" x="0" y="6">ABC</text><path class="gr" d="M4 10l3 3 5-5"/>',
  scaletext: '<path class="fb" d="M1.500 1.500h13v13h-4v-10h-9z"/><path class="fw" d="M1.500 4.500h9v10h-9z"/><text x="3" y="13">A</text>',
  justify: '<path class="fw" d="M2.500 2.500h11v11h-11z"/><text x="5" y="12">A</text>' + grip(2, 14) + grip(14, 8),
  spacetrans: '<path class="y" d="M1.500 1.500h13v2h-13z"/><path class="fw" d="M5.500 6.500h6v6h-6zM1.500 9.500h7v5h-7z"/><path d="M14.500 6v8h-3"/>',

  erase: '<path d="M15 2l-7 8" stroke="#d89838" stroke-width="4"/><circle cx="6" cy="11.500" r="3" fill="#d04028" stroke="none"/><path d="M1 14.500h13"/>',
  mcopy: '<circle class="fw" cx="4" cy="3.500" r="3"/><circle class="fb" cx="13" cy="12" r="3"/><circle class="fb" cx="10" cy="11" r="3.500"/><path d="M9 2.500h4v3" stroke="#000"/>',
  mirror: '<path class="fw" d="M6 3v11H1z"/><path class="fb" d="M10 3v11h5z"/><path class="fk" d="M7.500 0h1v16h-1z"/>',
  offset: '<path d="M1 11.500V9.500h2.500V6q0-4.500 4.500-4.500T12.500 6v3.500H15" stroke-width="1.500"/><path class="fb" d="M1 14.500h14v-3h-4.500V6q-2.500-3-5 0v5.500H1z"/>',
  array: '<path class="fw" d="M1.500 1.500h5v5h-5z"/><path class="fb" d="M9.500 1.500h5v5h-5zM1.500 9.500h5v5h-5zM9.500 9.500h5v5h-5z"/>',
  move: '<path class="fk" d="M8 0l3 4H9v2H7V4H5zM8 16l3-4H9v-2H7v2H5zM0 8l4-3v2h2v2H4v2zM16 8l-4-3v2h-2v2h2v2z"/>' + grip(8, 8),
  rotate: '<path d="M5 3q-4 3-3 7 2 5 7 4.500 5-1 5.500-6Q14 3 8 2.500" stroke-width="1.500"/><path class="fk" d="M4 0l6 2-5 4z"/>',
  scale: '<path class="fb" d="M1.500 1.500h13v13h-13z"/><path class="fw" d="M1.500 7.500h7v7h-7z"/>',
  stretch: '<path class="fw" d="M1.500 1.500h7v13h-7z"/><path class="fb" d="M10 1.500h2l3 13h-5z"/><path d="M5 11.500h6M9 9l3 2.500L9 14" stroke="#000"/>',
  trim: '<path d="M0 8.500h5"/><path class="b" d="M9 8.500h7" stroke-dasharray="2 1"/><path class="b" d="M4 14L10 2"/>',
  extend: '<path d="M0 8.500h6"/><path class="b" d="M6 8.500h5" stroke-dasharray="2 1"/><path class="b" d="M10 14l5-12"/>',
  breakpt: '<path class="fw" d="M15 4.500H1.500v10H15"/><path class="blue" d="M11 3h3v3h-3z"/>',
  break: '<path class="fw" d="M4 4.500H1.500v10h13v-10H12"/><path class="blue" d="M4 3h3v3H4zM10 3h3v3h-3z"/>',
  join: '<path d="M1 8.500h14"/><path class="blue" d="M4 5l4 3.500L4 12zM12 5L8 8.500l4 3.500z"/>',
  chamfer: '<path class="fw" d="M8 1.500h6.500v13h-13V8"/><path class="b" d="M1 8.500L8.500 1"/>',
  fillet: '<path class="fw" d="M10 1.500h4.500v13h-13V10"/><path class="b" d="M1.500 11Q2 2 11 1.500"/>',
  explode: '<path class="fb" d="M1 7l3-3h4v7H1zM9 4l6-1v6l-4 3H9zM5 13h6V7H5zM7 3h5l-2 3H6z"/>',
  order: '<path class="fw" d="M5.500 6.500h9v7h-9z"/><path class="fd" d="M.5 2.500h10v7H.5z"/>',
  edithatch: '<path d="M3.500 1v14M12.500 1v14M1 3.500h14M1 12.500h14"/><path class="dim" d="M4 4l7 7M4 7l4 4M8 4l4 4"/>' + pencil,
  editpl: '<path d="M1 13.500h11q3-1 3-4t-5-3L1 13"/>' + pencil,
  editspl: '<path d="M2 3q8-3 11 1-3 4-9 6 2 6 10 3"/>' + pencil,
  editattr: '<path class="fw" d="M1 4.500h8l5 5-5 5-6-6z"/>' + pencil,
  blockattr: win(8, 1) + '<path class="fw" d="M1.500 8.500h7v5h-7z"/><circle class="fg" cx="10" cy="12" r="3"/><path d="M4.500 8V4.500h3"/>',
  syncattr: '<path class="fw" d="M1 4.500h8l6 5-6 6-6-6z"/><path d="M10 5q3-3 5 0M15 8q-2 3-4 0" stroke="#3a9a20"/>',
  extract: '<path class="fb" d="M1.500 2.500h8v4h-8zM1.500 6.500h7v5h-7zM8.500 10.500h6v4h-6z"/><path class="blue" d="M8 3h4V0l4 4-4 4V5H8zM3 9h2v1H3zM10 12h2v1h-2z"/>',

  dlinear: '<path d="M.5 1v14M15.500 1v14M1 6.500h14M4 4.500l-3 2 3 2M12 4.500l3 2-3 2"/>',
  daligned: '<path d="M4 1L1 4M15 12l-3 3M3 3l10 10M3 6V3h3M10 13h3v-3"/>',
  darc: '<path d="M1 14Q2 2 15 1M5 15q1-9 10-10M5 12v3M12 5h3"/>' + grip(2, 14) + grip(15, 2),
  dord: '<path d="M5.500 4v10.500H15M5 10l4 1 5-6"/><text class="tb tiny-text" x="0" y="7">Y</text><text class="tb tiny-text" x="0" y="15">0</text><text class="tb tiny-text" x="11" y="5">X</text>',
  drad: '<circle class="fw" cx="8" cy="8" r="7"/><path d="M8 8L4 4M4 7V4h3"/>',
  djog: '<path d="M1 6q6-7 14 3M6 15l3-5H6l7-6M9 4.500h4v4"/>',
  ddia: '<circle class="fw" cx="8" cy="8" r="7"/><path d="M3 3l10 10M3 6V3h3M10 13h3v-3"/>',
  dang: '<path d="M15 14.500H1L11 1M7 5q6 2 6 9M7 5l3-1M11 11l2 3 2-3"/>',
  dquick: '<path d="M.5 1v14M15.500 1v14M1 4.500h14M4 2.500l-3 2 3 2M12 2.500l3 2-3 2"/><path class="y" d="M9 5L4 10h3l-2 5 7-6H9z" stroke-width=".5"/>',
  dbase: '<path d="M1.500 1v14M15.500 2v4M10.500 9v5M1 4.500h14M1 11.500h9M4 2L2 4.500 4 7M12 2l3 2.500L12 7"/>',
  dcont: '<path d="M.5 1v14M5.500 1v14M10.500 1v14M15.500 1v14M1 7.500h14M3 6v3M13 6v3"/>',
  dspace: '<path d="M1.500 1v4M15.500 1v4M1 3.500h14M1.500 11v4M15.500 11v4M1 13.500h14M4.500 6v5"/><path class="y" d="M8.500 4.500h4v7h-4z"/>',
  dbreak: '<path d="M0 5.500h6M10 5.500h4M14.500 2v7" class="dim"/><path d="M7.500 0v14M4 11l3.500 3 3.500-3M3 14.500h9"/>',
  tol: '<path class="fw" d="M.5 2.500h15v10H.5zM9.500 3v10"/><circle cx="5" cy="7.500" r="2.500"/><path d="M5 4v7M1 7.500h8"/><text class="tiny-text" x="10" y="10">.1</text>',
  cmark: '<circle class="fw" cx="8" cy="8" r="7"/><path d="M5 8h6M8 5v6" stroke="#000" stroke-width="1.500"/>',
  dinspect: '<path d="M.5 1v14M15.500 1v14M1 4.500h14"/><path class="gr" d="M4 9l3 4 6-6"/>',
  djogline: '<path d="M0 8h5l2-6 4 12 2-7 3-1M3 6L0 8l3 2"/>',
  dedit: dimLine + pencil,
  dtedit: dimLine + '<text x="5" y="8">A</text>',
  dupdate: '<path d="M.5 1v14M15.500 1v14M1 4.500h14"/><path d="M6 10q2-3 5 0M12 12q-2 4-5 1" stroke="#3a9a20" stroke-width="1.500"/>',

  track: '<path d="M2 7.500h10"/>' + grip(2, 8) + node(13, 7.5),
  from: '<path d="M2.500 14V3.500h10" stroke-dasharray="3 1"/>' + grip(3, 14) + node(13, 3.5),
  send: '<path d="M3 13L13 3"/>' + node(3, 13) + node(13, 3),
  smid: '<path d="M1 15L15 1"/>' + node(8, 8),
  sint: '<path d="M1 15L15 1M1 1l14 14"/>' + node(8, 8),
  sapp: '<path d="M1 15L15 1M1 1l14 14" stroke-dasharray="5 2"/>' + node(8, 8),
  sext: '<path d="M0 8.500h7"/><path d="M8 8.500h8" stroke-dasharray="2 1"/>',
  scen: '<circle class="fw" cx="8" cy="8" r="7"/>' + node(8, 8),
  squad: '<circle cx="8" cy="8" r="5.500"/>' + node(8, 2) + node(8, 14) + node(2, 8) + node(14, 8),
  stan: '<circle class="fg" cx="8.500" cy="9" r="6"/><path d="M1 8L8 0"/>' + node(4, 4),
  sperp: '<path d="M8 1v11M1 12.500h14"/>' + node(8, 12),
  spar: '<path d="M1 12L12 1M5 15L15 4" stroke-width="1.500"/>',
  sins: '<path d="M3.500 11V4.500h9V11"/><circle class="fg" cx="13" cy="11" r="2.500"/><path d="M5 11.500h6"/>' + node(3, 11),
  snode: node(8, 8),
  snear: '<path d="M1 14L14 1"/><circle cx="12" cy="12" r="2"/>' + node(8, 7),
  snone: '<path d="M3 15V6q0-4 3-4t3 4v9" stroke="#8c8c8c" stroke-width="3"/><path class="r" d="M9 1l6 6M15 1L9 7"/>' + grip(15, 13),
  ssettings: '<path d="M3 15V6q0-4 4-4t4 4v9" stroke="#7c2528" stroke-width="3"/><path d="M3 12.500v3M11 12.500v3" stroke="#ddd" stroke-width="3"/>' + grip(15, 14),

  binoc: '<path class="fw" d="M3 2h3v5h4V2h3l2 12h-5v-4H6v4H1z"/>',
  key: '<path d="M7 7l8 8" stroke="#eee" stroke-width="3"/><circle class="fw" cx="5" cy="5" r="4"/>',
  dish: '<path class="fw" d="M2 4q1 8 10 7zM5 11l-2 4h9l-3-4z"/><path d="M7 7l5-5"/>',
  star: '<path class="fw" d="M8 1l2 5h5l-4 4 2 5-5-3-5 3 2-5-4-4h5z"/>',
  helpc: '<circle class="fw" cx="8" cy="8" r="7.500"/><text class="mark" x="4.500" y="12">?</text>',
  min: '<path class="fk" d="M3 9h10v3H3z"/>',
  restore: '<path d="M6 5V3h7v8h-2M4 6h6v6H4z" stroke-width="2"/>',
  close: '<path d="M4 4l8 8M12 4l-8 8" stroke-width="2.500"/>',

  mspace: '<path class="fw" d="M2.500 2.500h11v9h-11zM1 14.500h14"/><path class="fk" d="M4 4v5h5z"/>',
  layout: '<path class="fw" d="M1.500 2.500h6v7h-6zM8.500 2.500h6v7h-6z"/><path d="M1 13h14" stroke-width="2"/>',
  wheel: '<circle class="fg" cx="8" cy="8" r="7"/><circle class="fw" cx="8" cy="8" r="3.500"/><path d="M3 3l4 4M13 3L9 7M3 13l4-4M13 13L9 9"/>',
  motion: '<path class="fw" d="M1.500 1.500h3v3h-3zM6.500 1.500h3v3h-3zM11.500 1.500h3v3h-3zM2.500 6.500h10v8h-10z"/><path class="fk" d="M6 8l5 2.500L6 13z"/>',
  anno: '<path class="fw" d="M8 1l2 8 5 4-1 2-6-3-6 3-1-2 5-4z"/>',
  annovis: '<path class="fw" d="M7 1l2 8 5 4-1 2-6-3-5 3-1-2 4-4z"/><circle cx="12" cy="10" r="3" fill="#ffb628" stroke="none"/>',
  annoadd: '<path class="fw dim" d="M7 1l2 8 5 4-1 2-6-3-5 3-1-2 4-4zM10 2l4 4"/>',
  gear: '<circle cx="8" cy="8" r="6" stroke-dasharray="2.500 2.200" stroke-width="3"/><circle class="fw" cx="8" cy="8" r="5"/><circle cx="8" cy="8" r="2.500"/>',
  padlock: '<path d="M5 8V4q0-3 3-3t3 3v4" stroke-width="2"/><path class="fw" d="M2.500 7.500h11v7h-11zM8 9v4"/>',
  clean: '<path class="fw" d="M1.500 2.500h13v11h-13z"/><path class="fk" d="M1 2h14v3H1z"/>',

  keyboard: '<path d="M.5 6.500h15v7H.5z" fill="#fff" stroke="#000"/><path d="M2 8.500h12M2 11.500h12" stroke="#000" stroke-dasharray="1 1"/><path d="M4 4l4-1 4 1" stroke="#000"/>',
  mic: '<path d="M2 14l8-9" stroke="#000" stroke-width="3"/><path d="M3 13l7-8" stroke="#ddd"/><circle cx="11.500" cy="4" r="3" fill="#bbb" stroke="#000"/>',
  lopt: '<path d="M5.500 2.500h4v9h-4z" fill="#fff" stroke="#003"/><path d="M6 5.500h3M6 8.500h3" stroke="#003"/>',
  speaker: '<circle cx="7" cy="7" r="5.500" fill="#777" stroke="#333"/><circle cx="6" cy="6" r="2.500" fill="#ccc" stroke="#444"/><path d="M14 9q0 4-4 6" stroke="#8cf"/>',
  shield: '<path d="M8 1l6 2q1 9-6 12Q1 12 2 3z" fill="#3fa53a" stroke="#fff" stroke-width="1.500"/><path d="M9 3L5 9h3l-1 4 4-6H8z" fill="#fff" stroke="none"/>',
  plus: '<circle cx="8" cy="8" r="7" fill="#ffd520" stroke="#4a9a20"/><path d="M8 4v8M4 8h8" stroke="#128012" stroke-width="3"/>',
  netx: '<path d="M2 9l5-6 7 3-2 6z" fill="#999" stroke="#444"/><path d="M3 5l9 9M12 5l-9 9" stroke="#e8301c" stroke-width="3"/>',
};

const svg = name => `<svg class="icon" viewBox="0 0 ${name === 'dd' ? 16 : 17} 16">${icons[name]}</svg>`;

const genTools = names => names.split(' ').map(name => {
  if (name === '|') return '<hr>';
  return `<button class="${name === 'dd' ? 'dd' : ''}" aria-label="${name}">${svg(name)}</button>`;
}).join('');

// gear teeth swept along the rack
const genEnvelope = () => {
  const teeth = [902.5, 942, 981.5, 1021, 1060.5, 1100, 1139.5];
  const last = teeth.length - 1;
  let out = '';

  const fan = (cx, dir, end) => {
    const rows = end ? 15 : 9;
    for (let k = 0; k <= rows; k++) {
      const t = k / rows;
      const [ox, oy] = end ? [-5 - 14 * t, 516 + 33 * t] : [-5 - 13 * t, 516 + 19 * t];
      const [ix, iy] = end ? [2 - 7 * t, 521 + 27 * t] : [3 - 8 * t, 521 + 18 * t];
      out += `<path d="M${cx + dir * ox} ${oy}L${cx + dir * ix} ${iy}" stroke="#000" stroke-width="1.3"/>`;
    }
  };

  const dots = (cx, w, bottom) => {
    for (let y = 553; y < bottom; y += 2) {
      const half = w * (bottom - y) / (bottom - 553);
      out += `<path d="M${cx - half} ${y}.5H${cx + half}" stroke="#c0c0c0" stroke-dasharray="1 2" stroke-dashoffset="${y % 4 === 1 ? 0 : 1}"/>`;
    }
  };

  teeth.forEach((cx, i) => {
    if (i === 0 || i === last) {
      const d = i === 0 ? 1 : -1;
      const at = pts => pts.map(([x, y]) => `${cx + d * x} ${y}`).join('L');
      out += `<path d="M${at([[-20, 549], [-14, 537], [-4, 541], [-5, 551], [0, 554], [9, 553], [15, 546], [8, 538], [13, 534], [20, 536], [20, 550], [16, 551], [11, 568], [5, 580], [-5, 580], [-9, 568], [-12, 550]])}z"/>`;
      fan(cx, d, true);
      dots(cx, 8, 567);
    } else {
      out += `<path fill-rule="evenodd" d="M${cx - 20} 536l4-3 5 1 6-11 5-4 5 4 6 11 5-1 4 3v14h-4l-5 18-5 12h-12l-5-12-5-18h-4zM${cx} 527l-4 9-2 13 3 4h6l3-4-2-13z"/>`;
      // open the slopes up before hatching them
      out += `<path fill="#c0c0c0" d="M${cx - 1} 520l-12 13 6 2zM${cx + 1} 520l12 13-6 2z"/>`;
      fan(cx, 1, false);
      fan(cx, -1, false);
      dots(cx, 5, 561);
    }
  });
  return out;
};

document.addEventListener('DOMContentLoaded', () => {
  document.querySelectorAll('[data-icons]').forEach(el => {
    el.innerHTML = genTools(el.dataset.icons);
  });
  document.querySelectorAll('[data-glyphs]').forEach(el => {
    el.innerHTML = el.dataset.glyphs.split(' ').map(svg).join('');
  });
  document.getElementById('envelope').innerHTML = genEnvelope();
});
```
